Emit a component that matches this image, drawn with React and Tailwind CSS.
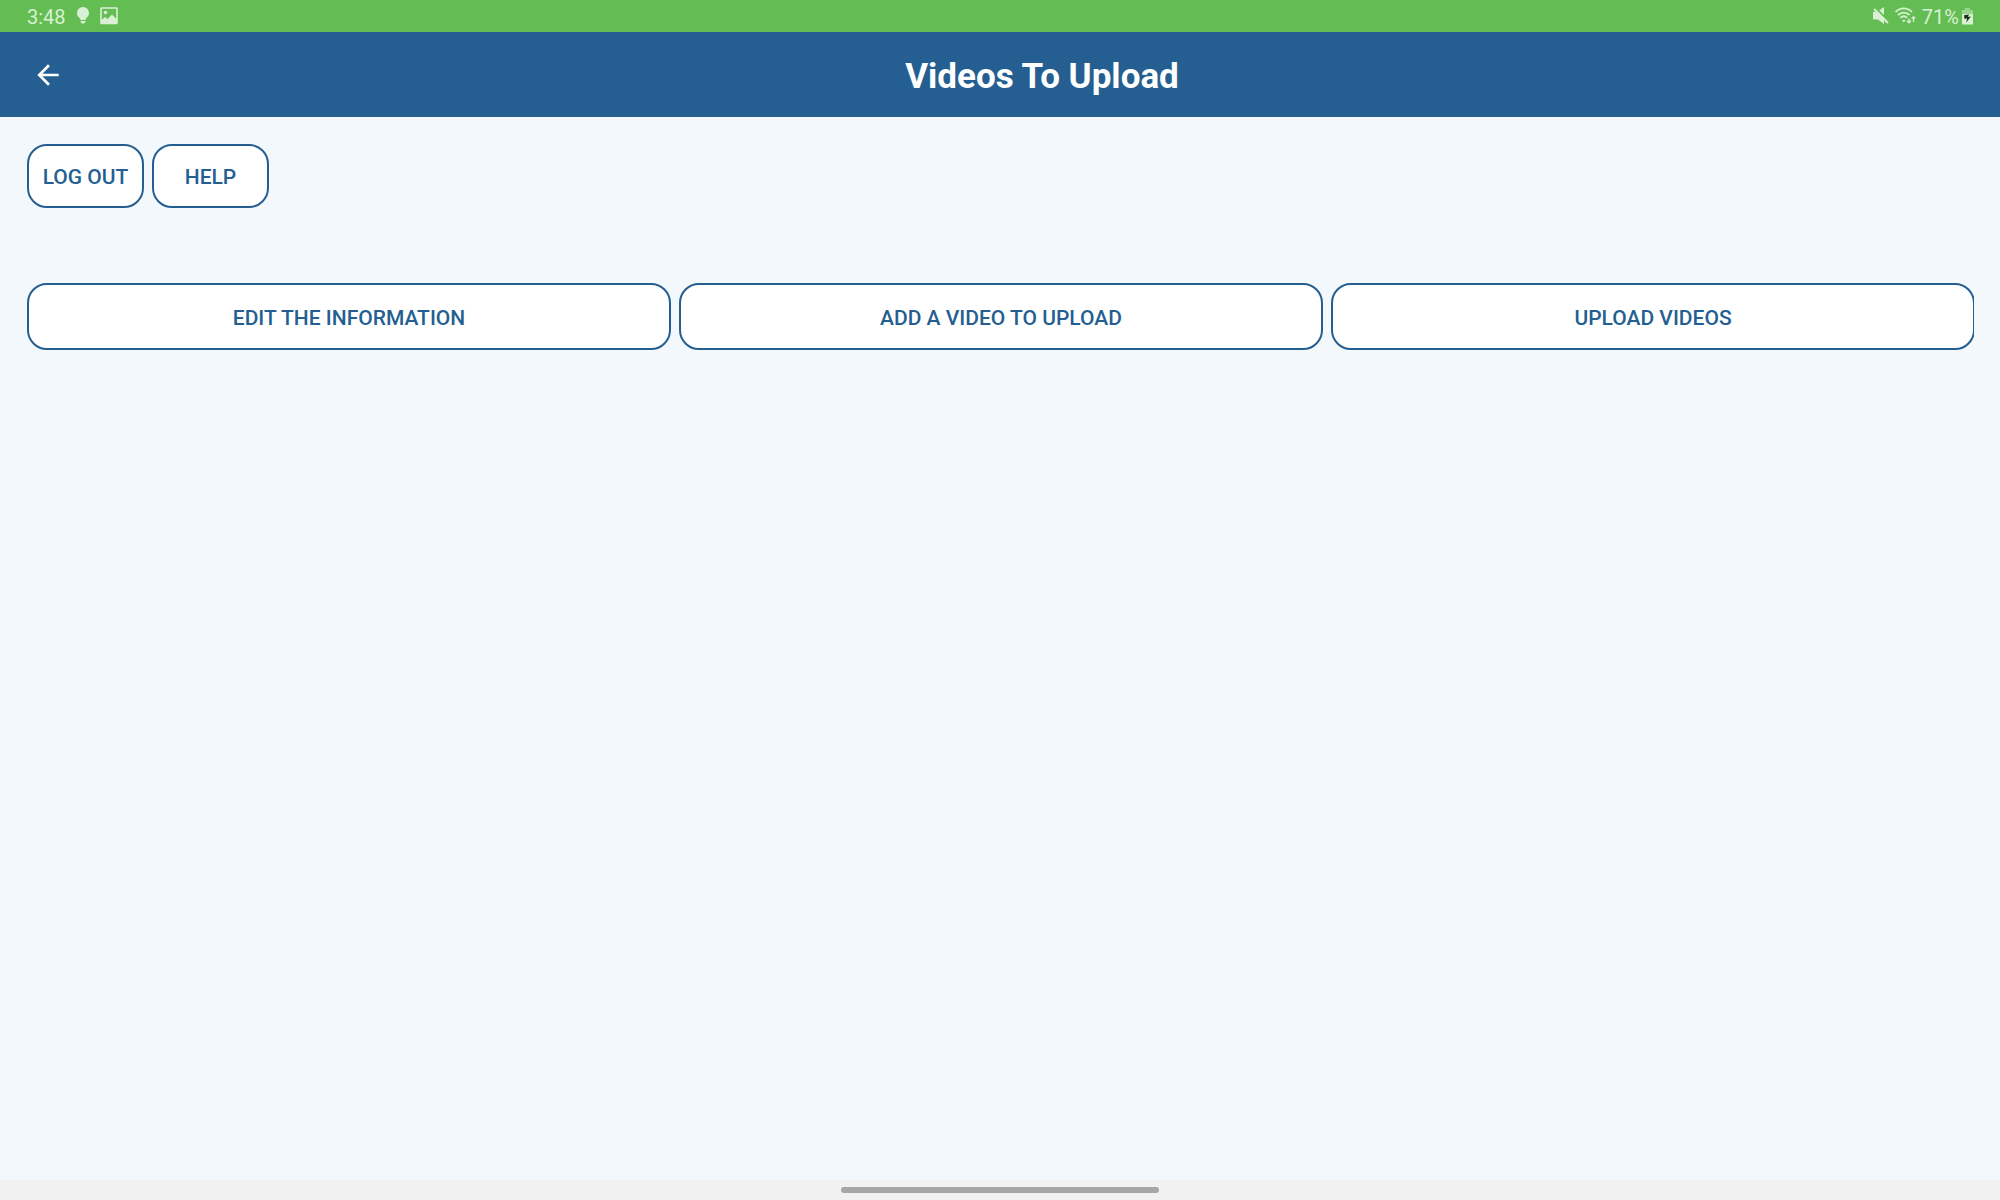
function BulbIcon() {
  return (
    <svg width="14" height="18" viewBox="0 0 14 18" fill="currentColor" aria-hidden="true">
      <path d="M7 0a6 6 0 0 0-6 6c0 2 .9 3.600 2.300 4.800.8.7 1.200 1.400 1.200 2.200h5c0-.8.400-1.500 1.200-2.200C12.100 9.600 13 8 13 6a6 6 0 0 0-6-6Z" />
      <path d="M4.500 14h5v1l-1.500 1.500H6L4.500 15Z" />
    </svg>
  );
}

function ImageIcon() {
  return (
    <svg width="18" height="18" viewBox="0 0 18 18" aria-hidden="true">
      <rect x="1" y="1" width="16" height="15.500" rx=".5" fill="none" stroke="currentColor" strokeWidth="1.600" />
      <circle cx="5.500" cy="5.500" r="1.800" fill="currentColor" />
      <path d="M1 13.500l4-3.500 2.500 2L12 7.500l5 5V17H1Z" fill="currentColor" />
    </svg>
  );
}

function MuteIcon() {
  return (
    <svg width="16" height="18" viewBox="0 0 16 18" aria-hidden="true">
      <path d="M0 5h4l7-5v17l-6-4.500H0Z" fill="currentColor" />
      <path d="M1.500 0l14 14" stroke="#64bd52" strokeWidth="2" />
      <path d="M1 2l14 14" stroke="currentColor" strokeWidth="2" />
    </svg>
  );
}

function WifiIcon() {
  return (
    <svg width="21" height="18" viewBox="0 0 21 18" fill="none" stroke="currentColor" strokeWidth="1.800" aria-hidden="true">
      <path d="M.6 5c4.600-4.800 11.800-4.800 16.400 0M3 8c3.400-3.200 8.200-3.200 11.600 0M5.400 10.800c2-1.800 4.800-1.800 6.800 0" />
      <path d="M6.800 13h4L8.800 15.400Z" fill="currentColor" stroke="none" />
      <path d="M14 11.500v4M12 13.800l2 2 2-2M18.500 15V10M16.700 11.600l1.800-2 1.800 2" strokeWidth="1.300" />
    </svg>
  );
}

function BatteryIcon() {
  return (
    <svg width="11" height="17" viewBox="0 0 11 17" aria-hidden="true">
      <path d="M3 0h5v2h3v4H0V2h3Z" fill="currentColor" opacity=".45" />
      <path d="M0 6h11v10.500H0Z" fill="currentColor" />
      <path d="M2 7.200l4.800-.8-.6 2.600 2.800-.4L4.200 14.500l.9-4L2.400 10.800Z" fill="#1c3518" />
    </svg>
  );
}

function StatusBar() {
  return (
    <div className="flex h-8 shrink-0 items-center justify-between bg-[#64bd52] px-[27px] text-xl leading-8 text-[#d9f0d4]">
      <div className="flex items-center">
        <time className="pt-0.5">3:48</time>
        <span className="ml-2.5"><BulbIcon /></span>
        <span className="ml-2.5"><ImageIcon /></span>
      </div>
      <div className="flex items-center">
        <MuteIcon />
        <span className="ml-1.5"><WifiIcon /></span>
        <span className="ml-1.5 pt-0.5">71%</span>
        <span className="ml-[3px]"><BatteryIcon /></span>
      </div>
    </div>
  );
}

function OutlineButton({ children, className = "" }) {
  return (
    <button
      type="button"
      className={`rounded-[20px] border-2 border-[#255f91] bg-white pt-0.5 text-[21px] leading-7 font-medium text-[#255f91] ${className}`}
    >
      {children}
    </button>
  );
}

export default function App() {
  return (
    <div className="flex min-h-screen flex-col bg-[#f2f8fb] font-[Roboto,sans-serif]">
      <StatusBar />
      <header className="flex h-[85px] shrink-0 items-center bg-[#255f91] text-white">
        <button type="button" aria-label="Back" className="flex w-[84px] justify-center pl-3">
          <svg width="32" height="32" viewBox="0 0 24 24" fill="currentColor" aria-hidden="true">
            <path d="M20 11H7.830l5.590-5.590L12 4l-8 8 8 8 1.410-1.410L7.830 13H20v-2z" />
          </svg>
        </button>
        <h1 className="flex-1 pt-1 text-center text-[35px] leading-10 font-bold">Videos To Upload</h1>
      </header>
      <main className="flex-1 pt-[27px] pr-[26px] pl-[27px]">
        <div className="flex gap-2">
          <OutlineButton className="h-16 w-[117px]">LOG OUT</OutlineButton>
          <OutlineButton className="h-16 w-[117px]">HELP</OutlineButton>
        </div>
        <div className="mt-[75px] overflow-hidden">
          <div className="-mr-px grid grid-cols-3 gap-2">
            <OutlineButton className="h-[67px]">EDIT THE INFORMATION</OutlineButton>
            <OutlineButton className="h-[67px]">ADD A VIDEO TO UPLOAD</OutlineButton>
            <OutlineButton className="h-[67px]">UPLOAD VIDEOS</OutlineButton>
          </div>
        </div>
      </main>
      <footer className="flex h-5 shrink-0 items-center justify-center bg-[#f1f1f1]">
        <div className="h-1.5 w-[318px] rounded-full bg-[#a6a6a6]" />
      </footer>
    </div>
  );
}
